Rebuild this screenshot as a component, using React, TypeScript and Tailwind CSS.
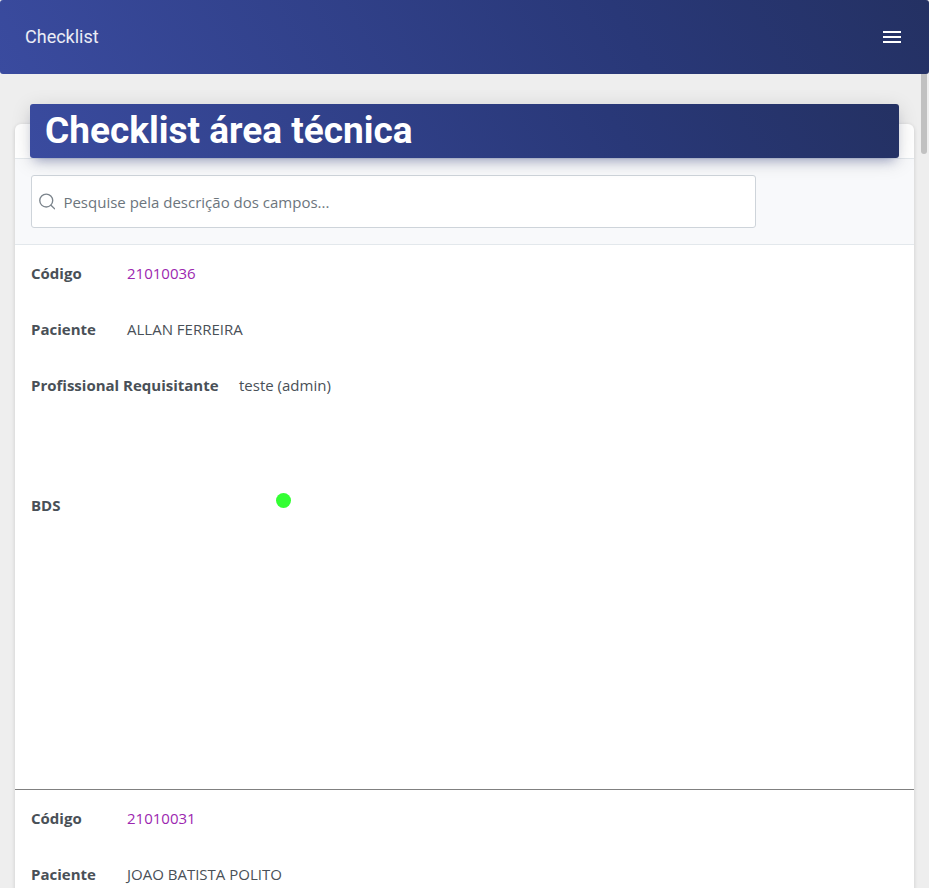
type Item = { codigo: string; paciente: string; profissional?: string };

const items: Item[] = [
  { codigo: "21010036", paciente: "ALLAN FERREIRA", profissional: "teste (admin)" },
  { codigo: "21010031", paciente: "JOAO BATISTA POLITO" },
];

const gradient = "bg-[linear-gradient(60deg,#3a4b9f,#293878_67%,#243163)]";

function Record({ item }: { item: Item }) {
  return (
    <dl className="h-[545px] border-b border-[#808080]">
      <div className="flex h-14 items-center px-4">
        <dt className="w-24 font-bold">Código</dt>
        <dd>
          <a href="#" className="text-[#9c27b0]">{item.codigo}</a>
        </dd>
      </div>
      <div className="flex h-14 items-center px-4">
        <dt className="w-24 font-bold">Paciente</dt>
        <dd>{item.paciente}</dd>
      </div>
      {item.profissional && (
        <>
          <div className="flex h-14 items-center px-4">
            <dt className="w-52 font-bold whitespace-nowrap">Profissional Requisitante</dt>
            <dd>{item.profissional}</dd>
          </div>
          <div className="mt-16 flex h-14 items-center px-4">
            <dt className="w-[245px] font-bold">BDS</dt>
            <dd className="mb-2.5 size-[15px] rounded-full bg-[#33ff33]" />
          </div>
        </>
      )}
    </dl>
  );
}

export default function App() {
  return (
    <div className="relative h-screen overflow-hidden bg-[#eeeeee] font-['Open_Sans','Noto_Sans',sans-serif] text-[15px] leading-6 text-[#495057]">
      <header className={`flex h-[74px] items-center justify-between rounded-[3px] px-[25px] ${gradient}`}>
        <a href="#" className="font-[Roboto,sans-serif] text-lg font-normal text-white/90">Checklist</a>
        <button type="button" aria-label="Menu" className="p-[3px]">
          <svg width="18" height="12" viewBox="0 0 18 12" fill="#fff">
            <path d="M0 0h18v2H0zM0 5h18v2H0zM0 10h18v2H0z" />
          </svg>
        </button>
      </header>
      <div className="absolute top-[74px] right-[2px] h-20 w-[6px] rounded-b-[3px] bg-[#c1c1c1]" />
      <main className="px-[15px] pt-[50px]">
        <section className="flex flex-col rounded-md bg-white shadow-[0_1px_4px_0_rgba(0,0,0,0.14)]">
          <div className={`relative mx-[15px] -mt-5 rounded-[3px] px-[15px] shadow-[0_4px_20px_0_rgba(0,0,0,0.14),0_7px_10px_-5px_rgba(59,77,162,0.4)] ${gradient}`}>
            <h1 className="font-[Roboto,sans-serif] text-[37px] leading-[54px] font-bold text-white">Checklist área técnica</h1>
          </div>
          <div className="border-y border-[#e3e8ec] bg-[#f8f9fb] p-4">
            <label className="flex h-[53px] max-w-[725px] items-center gap-2 rounded-[3px] border border-[#ced4da] bg-white px-[7px]">
              <svg width="17" height="17" viewBox="0 0 17 17" fill="none" stroke="#7b848c" strokeWidth="1.4" strokeLinecap="round" aria-hidden="true">
                <circle cx="7.5" cy="7.5" r="6.7" />
                <path d="M12.4 12.4l3.8 3.6" />
              </svg>
              <input
                type="text"
                aria-label="Pesquisar"
                placeholder="Pesquise pela descrição dos campos..."
                className="w-full bg-transparent outline-none placeholder:text-[#6c757d]"
              />
            </label>
          </div>
          {items.map((item) => (
            <Record key={item.codigo} item={item} />
          ))}
        </section>
      </main>
    </div>
  );
}
